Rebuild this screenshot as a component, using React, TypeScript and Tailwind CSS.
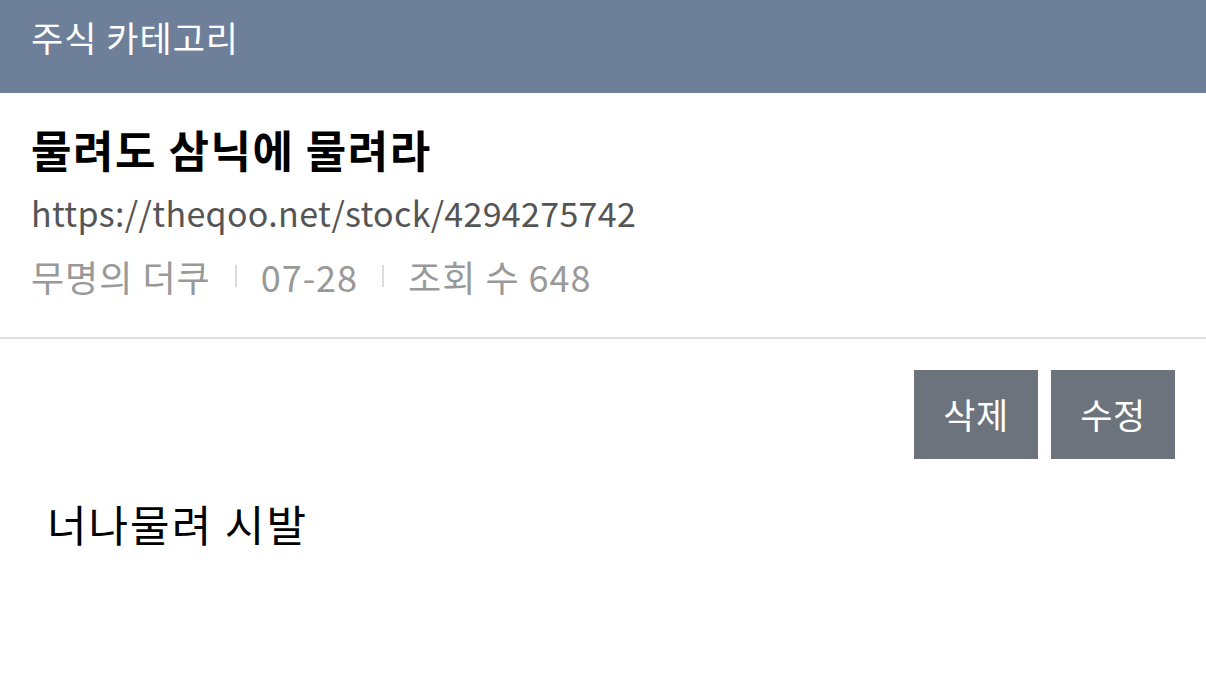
const font = { fontFamily: '"Noto Sans CJK KR", "Noto Sans", sans-serif' };

export default function App() {
  return (
    <main className="min-h-[685px] w-full bg-white" style={font}>
      <header className="flex h-[93px] items-start bg-[#6e7f99] px-[31px] pt-[13px]">
        <h2 className="text-[35px] leading-[48px] tracking-[1px] text-white">주식 카테고리</h2>
      </header>

      <section className="border-b-2 border-[#e0e0e0] px-[31px] pt-[26px] pb-[30px]">
        <h1 className="text-[44px] font-bold leading-[60px] tracking-[1.5px] text-black">
          물려도 삼닉에 물려라
        </h1>
        <p className="mt-[2px] text-[34px] leading-[64px] tracking-[0.3px] text-[#555]">
          https://theqoo.net/stock/4294275742
        </p>
        <div className="flex items-center text-[36px] leading-[62px] tracking-[1px] text-[#999]">
          <span>무명의 더쿠</span>
          <span className="mx-[24px] h-[22px] w-[2px] bg-[#ddd]" />
          <span>07-28</span>
          <span className="mx-[24px] h-[22px] w-[2px] bg-[#ddd]" />
          <span>조회 수 648</span>
        </div>
      </section>

      <div className="flex justify-end gap-[13px] px-[31px] pt-[31px]">
        <button className="h-[89px] w-[124px] bg-[#6c737c] text-[35px] tracking-[0.5px] text-white">삭제</button>
        <button className="h-[89px] w-[124px] bg-[#6c737c] text-[35px] tracking-[0.5px] text-white">수정</button>
      </div>

      <p className="px-[47px] pt-[36px] text-[43px] leading-[56px] tracking-[2px] text-black">너나물려 시발</p>
    </main>
  );
}
